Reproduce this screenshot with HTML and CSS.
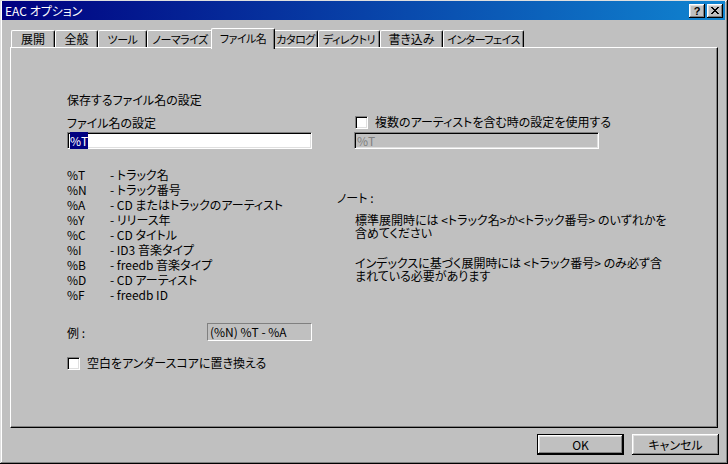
FILE: index.html
```html
<!DOCTYPE html>
<html lang="ja">
<head>
  <meta charset="UTF-8" />
  <title>EAC オプション</title>
  <link rel="stylesheet" href="styles.css">
</head>
<body>
  <div class="window">
    <div class="titlebar">
      <span class="title">EAC オプション</span>
      <div class="title-buttons">
        <span class="tbtn tbtn-help">?</span>
        <span class="tbtn">
          <svg width="8" height="7" viewBox="0 0 8 7"><path d="M0 0h2v1h1v1h2v-1h1v-1h2v1h-1v1h-1v1h-1v1h1v1h1v1h1v1h-2v-1h-1v-1h-2v1h-1v1h-2v-1h1v-1h1v-1h1v-1h-1v-1h-1v-1h-1z" fill="#000"/></svg>
        </span>
      </div>
    </div>

    <div class="tabs">
      <span class="tab t1">展開</span>
      <span class="tab t2">全般</span>
      <span class="tab t3 kana">ツール</span>
      <span class="tab t4 kana">ノーマライズ</span>
      <span class="tab t5 kana active">ファイル名</span>
      <span class="tab t6 kana">カタログ</span>
      <span class="tab t7 kana">ディレクトリ</span>
      <span class="tab t8">書き込み</span>
      <span class="tab t9 kana">インターフェイス</span>
    </div>

    <div class="panel">
      <div class="col-left">
        <div class="line">保存するファイル名の設定</div>
        <div class="line label">ファイル名の設定</div>
        <div class="edit"><span class="sel">%T</span></div>

        <table class="tokens">
          <tr><td>%T</td><td>- トラック名</td></tr>
          <tr><td>%N</td><td>- トラック番号</td></tr>
          <tr><td>%A</td><td>- CD またはトラックのアーティスト</td></tr>
          <tr><td>%Y</td><td>- リリース年</td></tr>
          <tr><td>%C</td><td>- CD タイトル</td></tr>
          <tr><td>%I</td><td>- ID3 音楽タイプ</td></tr>
          <tr><td>%B</td><td>- freedb 音楽タイプ</td></tr>
          <tr><td>%D</td><td>- CD アーティスト</td></tr>
          <tr><td>%F</td><td>- freedb ID</td></tr>
        </table>

        <div class="example">
          <span>例 :</span>
          <span class="static">(%N) %T - %A</span>
        </div>

        <div class="check-row underscore">
          <span class="checkbox"></span>
          <span>空白をアンダースコアに置き換える</span>
        </div>
      </div>

      <div class="col-right">
        <div class="check-row">
          <span class="checkbox"></span>
          <span>複数のアーティストを含む時の設定を使用する</span>
        </div>
        <div class="edit disabled">%T</div>

        <div class="line note-head">ノート :</div>
        <p class="note">標準展開時には &lt;トラック名&gt;か&lt;トラック番号&gt; のいずれかを<br>含めてください</p>
        <p class="note second">インデックスに基づく展開時には &lt;トラック番号&gt; のみ必ず含<br>まれている必要があります</p>
      </div>
    </div>

    <div class="footer">
      <span class="button default">OK</span>
      <span class="button">キャンセル</span>
    </div>
  </div>
</body>
</html>
```

FILE: styles.css
```css
body {
  margin: 0;
  background-color: #c0c0c0;
  font-family: "Noto Sans CJK JP", "Liberation Sans", sans-serif;
  font-size: 12px;
  font-feature-settings: "palt";
  color: #000;
}

.window {
  width: 728px;
  height: 464px;
  box-sizing: border-box;
  padding: 1px 3px 2px 2px;
  background-color: #c0c0c0;
  box-shadow: inset -1px -1px #000, inset 1px 1px #dfdfdf,
              inset -2px -2px #808080, inset 2px 2px #fff;
}

.titlebar {
  height: 19px;
  display: flex;
  align-items: center;
  justify-content: space-between;
  padding: 0 2px 0 3px;
  background: linear-gradient(to right, #000080, #1084d0);
  color: #fff;
}

.title {
  font-size: 12px;
  line-height: 19px;
}

.title-buttons {
  display: flex;
  gap: 2px;
}

.tbtn {
  width: 16px;
  height: 14px;
  box-sizing: border-box;
  display: flex;
  align-items: center;
  justify-content: center;
  background-color: #c0c0c0;
  color: #000;
  box-shadow: inset -1px -1px #000, inset 1px 1px #fff,
              inset -2px -2px #808080, inset 2px 2px #dfdfdf;
}

.tbtn-help {
  font-family: "Liberation Sans", sans-serif;
  font-weight: bold;
  font-size: 11px;
  line-height: 14px;
}

/* tabs */
.tabs {
  display: flex;
  align-items: flex-end;
  height: 19px;
  margin-top: 8px;
  padding-left: 9px;
}

.tab {
  height: 17px;
  box-sizing: border-box;
  display: flex;
  align-items: center;
  justify-content: center;
  white-space: nowrap;
  line-height: 14px;
  border-top: 1px solid #fff;
  border-left: 1px solid #fff;
  border-right: 1px solid #000;
  border-radius: 2px 2px 0 0;
  box-shadow: inset -1px 0 #808080;
}

.tab.kana {
  font-size: 11px;
  letter-spacing: -0.5px;
}

.t1 { width: 44px; }
.t2 { width: 43px; }
.t3 { width: 49px; }
.t4 { width: 66px; }
.t5 { width: 60px; }
.t6 { width: 45px; }
.t7 { width: 62px; }
.t8 { width: 63px; }
.t9 { width: 81px; }

.tab.active {
  width: 64px;
  height: 21px;
  margin: 0 -2px -2px;
  padding-bottom: 2px;
  background-color: #c0c0c0;
  position: relative;
  z-index: 1;
}

/* panel */
.panel {
  width: 708px;
  height: 381px;
  box-sizing: border-box;
  margin-left: 8px;
  display: flex;
  border-top: 1px solid #fff;
  border-left: 1px solid #fff;
  border-right: 1px solid #000;
  border-bottom: 1px solid #000;
  box-shadow: inset -1px -1px #808080;
}

.line {
  line-height: 14px;
  white-space: nowrap;
}

.col-left {
  width: 245px;
  padding: 45px 0 0 56px;
}

.label {
  margin-top: 9px;
}

.edit {
  height: 17px;
  box-sizing: border-box;
  margin-top: 2px;
  padding: 1px 0 0 2px;
  line-height: 13px;
  background-color: #fff;
  border-top: 1px solid #808080;
  border-left: 1px solid #808080;
  border-bottom: 1px solid #fff;
  border-right: 1px solid #fff;
  box-shadow: inset 1px 1px #000, inset -1px -1px #dfdfdf;
}

.sel {
  background-color: #000080;
  color: #fff;
}

.edit.disabled {
  width: 245px;
  margin-top: 3px;
  background-color: #c0c0c0;
  color: #808080;
}

.tokens {
  border-collapse: collapse;
  margin-top: 18px;
}

.tokens td {
  padding: 0;
  height: 15px;
  line-height: 15px;
  white-space: nowrap;
}

.tokens td:first-child {
  width: 43px;
}

.example {
  display: flex;
  align-items: center;
  justify-content: space-between;
  margin-top: 21px;
}

.static {
  width: 105px;
  height: 18px;
  box-sizing: border-box;
  padding-left: 2px;
  line-height: 16px;
  border-top: 1px solid #808080;
  border-left: 1px solid #808080;
  border-bottom: 1px solid #fff;
  border-right: 1px solid #fff;
}

.check-row {
  display: flex;
  align-items: center;
  gap: 7px;
  line-height: 14px;
  white-space: nowrap;
}

.underscore {
  margin-top: 15px;
}

.checkbox {
  width: 13px;
  height: 13px;
  box-sizing: border-box;
  background-color: #fff;
  border-top: 1px solid #808080;
  border-left: 1px solid #808080;
  border-bottom: 1px solid #fff;
  border-right: 1px solid #fff;
  box-shadow: inset 1px 1px #000, inset -1px -1px #dfdfdf;
}

.col-right {
  padding: 67px 0 0 25px;
}

.col-right .check-row {
  padding-left: 18px;
}

.col-right .edit {
  margin-left: 17px;
}

.note-head {
  margin-top: 42px;
}

.note {
  margin: 8px 0 0 18px;
  line-height: 13px;
  white-space: nowrap;
}

.note.second {
  margin-top: 17px;
}

/* buttons */
.footer {
  display: flex;
  justify-content: flex-end;
  gap: 8px;
  margin-top: 6px;
  padding-right: 6px;
}

.button {
  width: 87px;
  height: 21px;
  box-sizing: border-box;
  display: flex;
  align-items: center;
  justify-content: center;
  box-shadow: inset -1px -1px #000, inset 1px 1px #fff,
              inset -2px -2px #808080, inset 2px 2px #dfdfdf;
}

.button.default {
  border: 1px solid #000;
}
```
